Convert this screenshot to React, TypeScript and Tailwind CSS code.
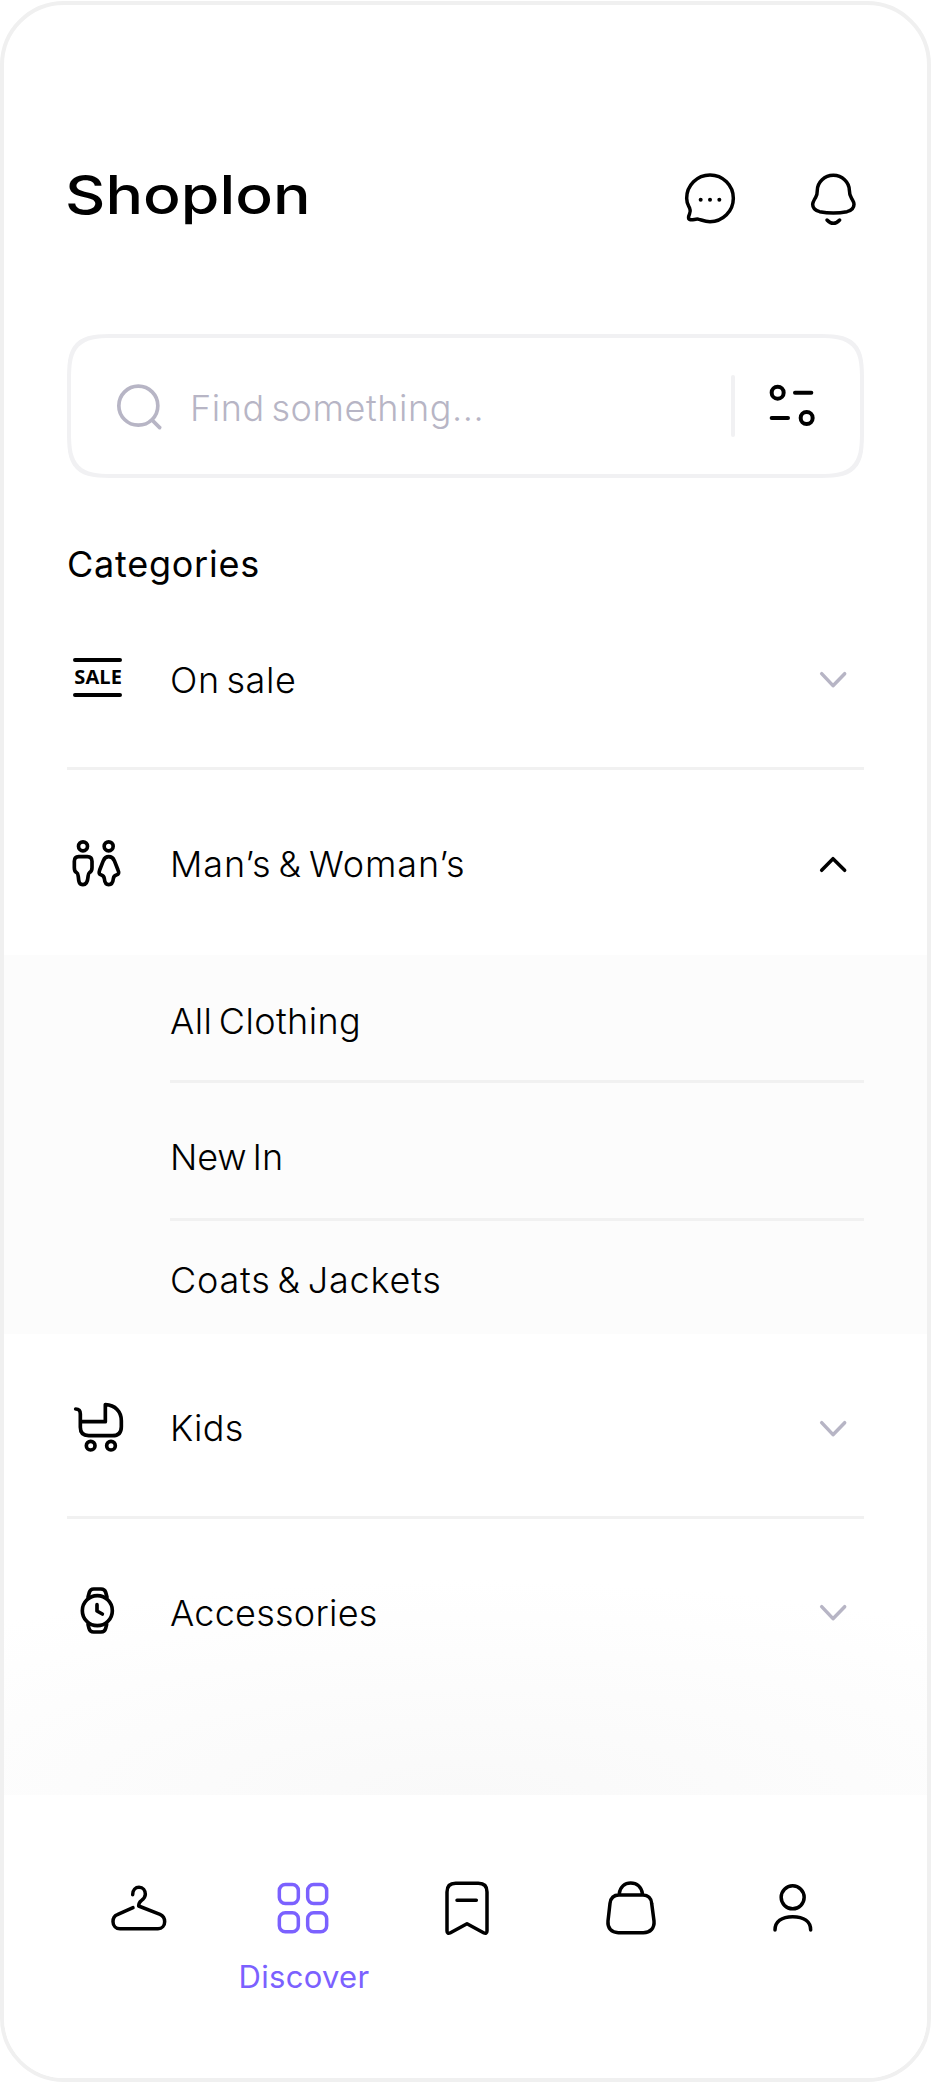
import type { ReactNode } from "react";

function Icon({ box, className, width = 10.5, children }: { box: string; className: string; width?: number; children: ReactNode }) {
  return (
    <svg
      viewBox={box}
      className={`block shrink-0 ${className}`}
      fill="none"
      stroke="currentColor"
      strokeWidth={width}
      strokeLinecap="round"
      strokeLinejoin="round"
    >
      {children}
    </svg>
  );
}

function Chevron({ open = false }: { open?: boolean }) {
  return (
    <Icon box="0 0 120 120" className={open ? "mr-[11px] size-10 text-black" : "mr-[11px] size-10 text-[#b7b5c5]"}>
      <path d={open ? "M26 76 60 41 95 76" : "M26 41 60 77 95 41"} />
    </Icon>
  );
}

function Row({ icon, label, open, className }: { icon: ReactNode; label: ReactNode; open?: boolean; className: string }) {
  return (
    <div className={`flex items-start ${className}`}>
      <div className="-mt-1.5 w-[103px] shrink-0">{icon}</div>
      <div className="flex-1 leading-[48px]">{label}</div>
      <div className="mt-1">
        <Chevron open={open} />
      </div>
    </div>
  );
}

export default function App() {
  return (
    <div className="h-[2082px] w-[932px] bg-white pt-px">
      <div className="flex h-[2081px] w-[931px] flex-col overflow-hidden rounded-[64px] border-4 border-[#f0f0f0] bg-white font-['Inter',sans-serif] text-[36px] font-light tracking-[0.25px] text-black [word-spacing:-4px]">
        <header className="flex h-[329px] shrink-0 items-start justify-between pt-[158px] pr-[69px] pl-[61px]">
          <h1 className="origin-left scale-x-[1.18] text-[53px] leading-[64px] font-medium tracking-normal">Shoplon</h1>
          <div className="mt-2 flex gap-[72px]">
            <Icon box="130 93 162 162" className="size-[54px]">
              <path d="M211 105A70 70 0 0 1 211 245C196 245 186 240 178 238C170 235 160 241 152 239C147 238 146 234 147 229C149 221 154 216 151 208C148 198 141 192 141 175A70 70 0 0 1 211 105Z" />
              <g fill="currentColor" stroke="none">
                <circle cx="183" cy="179" r="6" />
                <circle cx="211" cy="179" r="6" />
                <circle cx="239" cy="179" r="6" />
              </g>
            </Icon>
            <Icon box="508 93 147 168" className="h-14 w-[49px]">
              <path d="M581 106C608 106 628 126 629 150C629 168 634 172 638 179C642 186 643 189 643 193C643 206 634 212 622 215C598 220 564 220 540 215C528 212 519 205 519 193C519 188 521 184 525 177C530 168 533 168 533 150C534 126 554 106 581 106Z" />
              <path d="M562 240Q581 260 600 240" />
            </Icon>
          </div>
        </header>

        <div className="mx-[63px] flex h-36 shrink-0 items-center rounded-[34px] border-4 border-[#f1f1f3] pr-[43px] pl-[43px] supports-[corner-shape:squircle]:rounded-[50px] supports-[corner-shape:squircle]:[corner-shape:superellipse(1.8)]">
          <Icon box="192 183 150 150" width={11} className="size-[50px] text-[#b7b5c5]">
            <circle cx="265" cy="257" r="58.5" />
            <path d="M308 302 329 323" />
          </Icon>
          <div className="flex-1 pt-1 pl-[26px] leading-[48px] text-[#b7b5c5]">
            <span className="tracking-[0.57px]">Find something...</span>
          </div>
          <div className="mr-8 h-[62px] w-1 rounded-full bg-[#f1f1f3]" />
          <Icon box="262 183 150 150" width={12} className="size-[50px]">
            <circle cx="294" cy="218" r="18" />
            <circle cx="381" cy="294" r="18" />
            <path d="M346 218H395M276 294H325" />
          </Icon>
        </div>

        <h2 className="mt-[62px] shrink-0 px-[63px] leading-[48px] font-normal tracking-[0.75px]">
          <span>Categories</span>
        </h2>

        <div className="mx-[63px] h-[182px] shrink-0 border-b-[3px] border-[#f1f1f1]">
          <Row
            className="pt-[68px]"
            label={<span className="tracking-[0.6px]">On sale</span>}
            icon={
              <Icon box="51 60 180 180" width={12} className="size-[60px]">
                <path d="M75 90H210M75 195H210" />
                <text x="73" y="162" textLength="143" lengthAdjust="spacingAndGlyphs" className="font-['Open_Sans',sans-serif] text-[59px] font-bold" fill="currentColor" stroke="none">
                  SALE
                </text>
              </Icon>
            }
          />
        </div>
        <div className="mx-[63px] h-[185px] shrink-0">
          <Row
            open
            className="pt-[71px]"
            label={<span className="-mt-px block tracking-[0.9px]">Man’s &amp; Woman’s</span>}
            icon={
              <Icon box="51 615 180 180" width={11} className="size-[60px]">
                <circle cx="99" cy="649" r="13.5" />
                <circle cx="176" cy="649" r="13.5" />
                <path d="M86 680H112C121 680 126 685 126 694V713C126 721 124 725 118 728C115 730 115 734 114 741C113 754 111 764 99 764C87 764 86 754 85 741C84 734 84 730 80 728C74 725 73 721 73 713V694C73 685 78 680 86 680Z" />
                <path d="M176 680C186 680 190 685 193 692L204 720C208 729 206 733 199 735C192 737 191 739 190 746C189 757 186 764 176 764C166 764 164 757 163 746C162 739 161 737 154 735C147 733 146 729 149 720L160 692C163 685 167 680 176 680Z" />
              </Icon>
            }
          />
        </div>

        <div className="h-[379px] shrink-0 bg-[#fcfcfc] pr-[63px] pl-[166px] leading-[48px]">
          <div className="h-[128px] border-b-[3px] border-[#f1f1f1] pt-[42px]">
            <span className="tracking-[0.4px]">All Clothing</span>
          </div>
          <div className="h-[138px] border-b-[3px] border-[#f1f1f1] pt-[50px]">
            <span className="tracking-[-0.1px]">New In</span>
          </div>
          <div className="pt-[35px]">
            <span className="tracking-[0.8px]">Coats &amp; Jackets</span>
          </div>
        </div>

        <div className="mx-[63px] h-[185px] shrink-0 border-b-[3px] border-[#f1f1f1]">
          <Row
            className="pt-[71px]"
            label={<span className="-mt-px block">Kids</span>}
            icon={
              <Icon box="51 57 180 180" width={11} className="size-[60px]">
                <path d="M77 87C87 87 91 91 91 102V142C91 158 100 167 116 167H187C205 167 214 157 214 140V122C214 95 196 75 166 74V125H92" />
                <circle cx="122" cy="197" r="13" />
                <circle cx="183" cy="197" r="13" />
              </Icon>
            }
          />
        </div>
        <div className="h-[276px] shrink-0 bg-[radial-gradient(ellipse_85%_78%_at_50%_100%,#f9f9f9,#ffffff)] px-[63px]">
          <Row
            className="pt-[70px]"
            label={<span>Accessories</span>}
            icon={
              <Icon box="51 609 180 180" width={11} className="size-[60px]">
                <circle cx="142" cy="692" r="45" />
                <path d="M114 652 118 637C120 630 124 627 131 627H153C160 627 165 630 167 637L171 652M114 733 117 745C119 753 123 756 131 756H153C161 756 165 753 167 745L170 733M141 674V693L157 702" />
              </Icon>
            }
          />
        </div>

        <nav className="grid flex-1 grid-cols-[repeat(5,164px)] content-start justify-items-center bg-white pt-[83px] pl-[53px]">
          <Icon box="327 354 180 180" className="size-[60px]">
            <path d="M398 404C398 390 407 382 417 382C429 382 436 392 436 403C436 412 431 417 424 422C417 427 416 430 416 438L480 463C489 467 494 475 494 485C494 497 486 506 474 506H360C348 506 339 497 339 485C339 475 344 467 352 464L399 443" />
          </Icon>
          <div className="flex flex-col items-center text-[#7b61ff]">
            <Icon box="819 354 180 180" className="size-[60px]">
              <rect x="838" y="373.500" width="57" height="57" rx="18" />
              <rect x="923" y="373.500" width="57" height="57" rx="18" />
              <rect x="838" y="458.500" width="57" height="57" rx="18" />
              <rect x="923" y="458.500" width="57" height="57" rx="18" />
            </Icon>
            <span className="mt-[19px] pl-0.5 text-[31px] leading-10 font-normal tracking-[0.3px]">Discover</span>
          </div>
          <Icon box="51 354 180 180" className="size-[60px]">
            <path d="M81 396Q81 370 107 370H175Q201 370 201 396V513C201 519 197 521 192 519L141 491L90 519C85 521 81 519 81 513ZM111 421H169" />
          </Icon>
          <Icon box="546 354 180 180" className="size-[60px]">
            <path d="M601 400C604 381 617 369 635 369C654 369 667 381 670 400M600 405H672C687 405 697 415 698 430L705 483C707 504 694 518 673 518H598C577 518 565 504 567 483L573 430C575 415 584 405 600 405Z" />
          </Icon>
          <Icon box="1035 354 180 180" className="size-[60px]">
            <circle cx="1118" cy="412" r="34.500" />
            <path d="M1065 510C1065 485 1085 470 1118 470C1152 470 1172 485 1172 510" />
          </Icon>
        </nav>
      </div>
    </div>
  );
}
